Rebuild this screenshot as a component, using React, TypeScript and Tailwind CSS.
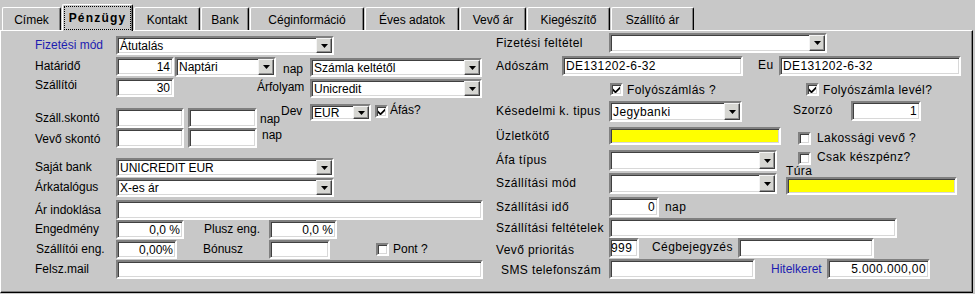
import React from "react";

const sunken =
  "box-border border-2 border-t-[#808080] border-l-[#808080] border-b-white border-r-white shadow-[inset_1px_1px_0_#404040,inset_-1px_-1px_0_#d8d8d8]";

type BoxProps = {
  cls: string;
  value?: string;
  right?: boolean;
  yellow?: boolean;
};

const TextBox = ({ cls, value = "", right, yellow }: BoxProps) => (
  <div
    className={`${sunken} ${cls} shrink-0 flex items-center overflow-hidden whitespace-nowrap px-[2px] ${
      yellow ? "bg-[#ffff00]" : "bg-white"
    } ${right ? "justify-end" : ""}`}
  >
    {value}
  </div>
);

const Combo = ({ cls, value = "" }: BoxProps) => (
  <div className={`${sunken} ${cls} shrink-0 flex bg-white`}>
    <span className="flex-1 flex items-center overflow-hidden whitespace-nowrap pl-[2px]">
      {value}
    </span>
    <span className="w-[16px] shrink-0 flex items-center justify-center bg-[#d6d6d2] border border-t-[#f4f4f4] border-l-[#f4f4f4] border-b-[#404040] border-r-[#404040] shadow-[inset_-1px_-1px_0_#909090]">
      <svg width="7" height="4" viewBox="0 0 7 4">
        <path d="M0 0h7L3.5 4z" fill="#000" />
      </svg>
    </span>
  </div>
);

const Check = ({ checked, cls = "" }: { checked?: boolean; cls?: string }) => (
  <span
    className={`${sunken} ${cls} w-[13px] h-[13px] shrink-0 bg-white flex items-center justify-center`}
  >
    {checked && (
      <svg width="7" height="7" viewBox="0 0 7 7">
        <path d="M0 2.5L2.5 5L7 0.5V3L2.5 7.5L0 5z" fill="#000" />
      </svg>
    )}
  </span>
);

const tabs = [
  { t: "Címek", w: "w-[59px]" },
  { t: "Pénzügy", w: "w-[71px]", active: true },
  { t: "Kontakt", w: "w-[66px]" },
  { t: "Bank", w: "w-[48px]" },
  { t: "Céginformáció", w: "w-[114px]" },
  { t: "Éves adatok", w: "w-[94px]" },
  { t: "Vevő ár", w: "w-[66px]" },
  { t: "Kiegészítő", w: "w-[83px]" },
  { t: "Szállító ár", w: "w-[83px]" },
];

export default function App() {
  return (
    <div className="w-[975px] h-[294px] overflow-hidden bg-[#c8c8c8] text-[12px] leading-[14px] text-black font-['Liberation_Sans',Arial,sans-serif]">
      {/* tab strip */}
      <div className="flex items-end h-[30px] pl-[2px] gap-[1px]">
        {tabs.map((tab) =>
          tab.active ? (
            <div
              key={tab.t}
              className={`${tab.w} relative z-10 -mb-[1px] h-[27px] bg-[#c8c8c8] flex items-center justify-center font-bold tracking-[1.2px] border-t border-l border-r border-t-white border-l-white border-r-black rounded-t-[2px] shadow-[inset_-1px_0_0_#808080]`}
            >
              <span className="absolute inset-x-[1px] top-[1px] bottom-[1px] border border-dotted border-black" />
              {tab.t}
            </div>
          ) : (
            <div
              key={tab.t}
              className={`${tab.w} h-[23px] flex items-center justify-center pt-[1px] border-t border-l border-r border-t-white border-l-white border-r-black rounded-t-[2px] shadow-[inset_-1px_0_0_#808080]`}
            >
              {tab.t}
            </div>
          )
        )}
      </div>

      {/* panel */}
      <div className="w-[973px] h-[263px] flex border border-t-white border-l-white border-r-black border-b-black shadow-[inset_-1px_-1px_0_#808080]">
        {/* left column */}
        <div className="w-[494px] shrink-0 pl-[34px] flex flex-col">
          <div className="flex items-start h-[19px] mt-[5px]">
            <span className="w-[81px] shrink-0 leading-[19px] text-[#1c1cb0]">Fizetési mód</span>
            <Combo cls="w-[218px] h-[19px]" value="Átutalás" />
          </div>

          <div className="flex items-start h-[19px] mt-[2px]">
            <span className="w-[81px] shrink-0 leading-[19px]">Határidő</span>
            <TextBox cls="w-[58px] h-[19px]" value="14" right />
            <Combo cls="w-[101px] h-[20px] ml-[1px]" value="Naptári" />
            <span className="ml-[7px] w-[27px] shrink-0 mt-[5px]">nap</span>
            <Combo cls="w-[172px] h-[19px] mt-[1px]" value="Számla keltétől" />
          </div>

          <div className="flex items-start h-[19px] mt-[2px]">
            <span className="w-[81px] shrink-0 -mt-[2px] leading-[19px]">Szállítói</span>
            <TextBox cls="w-[58px] h-[19px]" value="30" right />
            <span className="ml-[83px] w-[53px] shrink-0 leading-[19px]">Árfolyam</span>
            <Combo cls="w-[172px] h-[19px] mt-[1px]" value="Unicredit" />
          </div>

          <div className="flex items-start h-[20px] mt-[11px]">
            <span className="w-[81px] shrink-0 leading-[20px]">Száll.skontó</span>
            <TextBox cls="w-[68px] h-[20px]" />
            <TextBox cls="w-[69px] h-[20px] ml-[4px]" />
            <span className="ml-[3px] w-[21px] shrink-0 leading-[20px] mt-[1px]">nap</span>
            <span className="w-[29px] shrink-0 -mt-[4px]">Dev</span>
            <Combo cls="w-[61px] h-[17px] -mt-[4px]" value="EUR" />
            <Check checked cls="ml-[4px] -mt-[3px]" />
            <span className="ml-[2px] -mt-[5px]">Áfás?</span>
          </div>

          <div className="flex items-start h-[20px]">
            <span className="w-[81px] shrink-0 leading-[20px] mt-[1px]">Vevő skontó</span>
            <TextBox cls="w-[68px] h-[20px]" />
            <TextBox cls="w-[69px] h-[20px] ml-[4px]" />
            <span className="ml-[5px] shrink-0">nap</span>
          </div>

          <div className="flex items-start h-[19px] mt-[10px]">
            <span className="w-[81px] shrink-0 leading-[19px]">Saját bank</span>
            <Combo cls="w-[218px] h-[19px]" value="UNICREDIT EUR" />
          </div>

          <div className="flex items-start h-[19px] mt-[1px]">
            <span className="w-[81px] shrink-0 leading-[19px]">Árkatalógus</span>
            <Combo cls="w-[218px] h-[19px]" value="X-es ár" />
          </div>

          <div className="flex items-start h-[20px] mt-[3px]">
            <span className="w-[81px] shrink-0 leading-[20px]">Ár indoklása</span>
            <TextBox cls="w-[367px] h-[20px]" />
          </div>

          <div className="flex items-start h-[19px]">
            <span className="w-[81px] shrink-0 leading-[19px]">Engedmény</span>
            <TextBox cls="w-[68px] h-[19px]" value="0,0 %" right />
            <span className="ml-[20px] w-[65px] shrink-0 leading-[19px]">Plusz eng.</span>
            <TextBox cls="w-[68px] h-[19px]" value="0,0 %" right />
          </div>

          <div className="flex items-start h-[19px] mt-[1px]">
            <span className="w-[81px] shrink-0 pl-[1px] leading-[19px]">Szállítói eng.</span>
            <TextBox cls="w-[61px] h-[19px]" value="0,00%" right />
            <span className="ml-[26px] w-[66px] shrink-0 leading-[19px]">Bónusz</span>
            <TextBox cls="w-[61px] h-[19px]" />
            <Check cls="ml-[46px] mt-[3px]" />
            <span className="ml-[4px] leading-[19px]">Pont ?</span>
          </div>

          <div className="flex items-start h-[19px] mt-[1px]">
            <span className="w-[81px] shrink-0 leading-[19px]">Felsz.mail</span>
            <TextBox cls="w-[367px] h-[19px]" />
          </div>
        </div>

        {/* right column */}
        <div className="flex-1 pl-[1px] flex flex-col tracking-[0.4px]">
          <div className="flex items-start h-[20px] mt-[2px]">
            <span className="w-[113px] shrink-0 leading-[20px]">Fizetési feltétel</span>
            <Combo cls="w-[218px] h-[20px]" />
          </div>

          <div className="flex items-start h-[20px] mt-[3px]">
            <span className="w-[66px] shrink-0 leading-[20px]">Adószám</span>
            <TextBox cls="w-[181px] h-[20px]" value="DE131202-6-32" />
            <span className="ml-[15px] w-[21px] shrink-0 leading-[18px]">Eu</span>
            <TextBox cls="w-[182px] h-[20px]" value="DE131202-6-32" />
          </div>

          <div className="flex items-center h-[13px] mt-[7px]">
            <Check checked cls="ml-[114px]" />
            <span className="ml-[4px] w-[179px] shrink-0">Folyószámlás ?</span>
            <Check checked />
            <span className="ml-[4px]">Folyószámla levél?</span>
          </div>

          <div className="flex items-start h-[21px] mt-[5px]">
            <span className="w-[113px] shrink-0 leading-[21px]">Késedelmi k. tipus</span>
            <Combo cls="w-[133px] h-[21px]" value="Jegybanki" />
            <span className="ml-[51px] w-[58px] shrink-0 leading-[18px]">Szorzó</span>
            <TextBox cls="w-[70px] h-[20px]" value="1" right />
          </div>

          <div className="flex items-start h-[19px] mt-[4px]">
            <span className="w-[113px] shrink-0 leading-[19px] mt-[1px]">Üzletkötő</span>
            <TextBox cls="w-[172px] h-[18px] mt-[1px]" yellow />
            <Check cls="ml-[17px] mt-[6px]" />
            <span className="ml-[6px] mt-[5px]">Lakossági vevő ?</span>
          </div>

          <div className="flex items-start h-[21px] mt-[5px]">
            <span className="w-[113px] shrink-0 leading-[21px]">Áfa típus</span>
            <Combo cls="w-[168px] h-[21px]" />
            <Check cls="ml-[21px] mt-[2px]" />
            <span className="ml-[6px]">Csak készpénz?</span>
          </div>

          <div className="flex items-start h-[21px] mt-[2px]">
            <span className="w-[113px] shrink-0 leading-[21px]">Szállítási mód</span>
            <Combo cls="w-[168px] h-[21px]" />
            <div className="ml-[9px] -mt-[8px] flex flex-col">
              <span className="leading-[12px]">Túra</span>
              <TextBox cls="w-[171px] h-[18px]" yellow />
            </div>
          </div>

          <div className="flex items-start h-[20px] mt-[3px]">
            <span className="w-[113px] shrink-0 leading-[20px]">Szállítási idő</span>
            <TextBox cls="w-[50px] h-[20px]" value="0" right />
            <span className="ml-[6px] leading-[20px]">nap</span>
          </div>

          <div className="flex items-start h-[20px] mt-[1px]">
            <span className="w-[113px] shrink-0 leading-[20px]">Szállítási feltételek</span>
            <TextBox cls="w-[288px] h-[20px]" />
          </div>

          <div className="flex items-start h-[20px]">
            <span className="w-[113px] shrink-0 leading-[20px] mt-[2px]">Vevő prioritás</span>
            <TextBox cls="w-[30px] h-[20px] !px-0" value="999" />
            <span className="ml-[13px] w-[86px] shrink-0 mt-[2px]">Cégbejegyzés</span>
            <TextBox cls="w-[136px] h-[20px]" />
          </div>

          <div className="flex items-start h-[20px] mt-[1px]">
            <span className="w-[113px] shrink-0 pl-[5px] leading-[20px] mt-[1px]">SMS telefonszám</span>
            <TextBox cls="w-[146px] h-[20px]" />
            <span className="ml-[16px] w-[56px] shrink-0 leading-[20px] tracking-normal text-[#1c1cb0]">
              Hitelkeret
            </span>
            <TextBox cls="w-[103px] h-[20px]" value="5.000.000,00" right />
          </div>
        </div>
      </div>
    </div>
  );
}
